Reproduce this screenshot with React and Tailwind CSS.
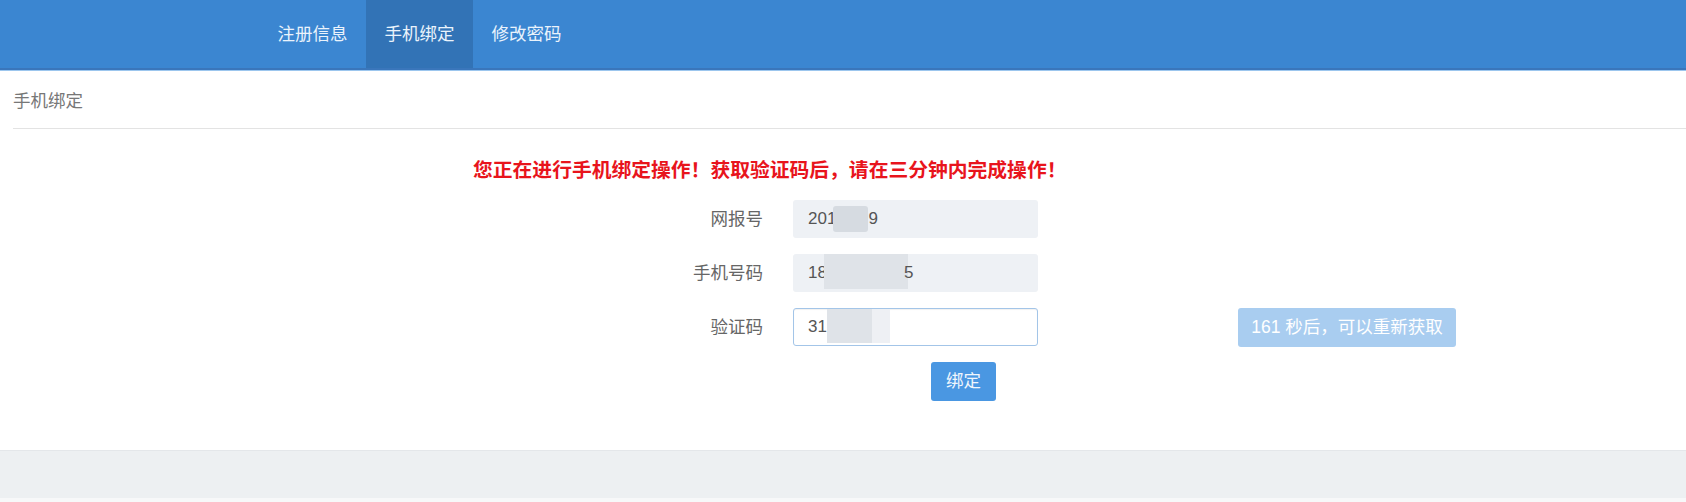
import React from "react";

const font = { fontFamily: '"Liberation Sans","Noto Sans CJK SC",sans-serif' };

function Label({ children }) {
  return (
    <div className="w-[100px] ml-[663px] mr-[30px] text-right text-[17.5px] text-[#666]">{children}</div>
  );
}

export default function App() {
  return (
    <div className="w-[1686px] h-[502px] bg-white flex flex-col" style={font}>
      {/* Header */}
      <div className="h-[70px] bg-[#3b86d1] flex pl-[259px] shadow-[0_1px_0_#9cc6ee] border-b-[2px] border-[#3a76bb] box-border">
        <div className="h-full px-[18.5px] flex items-center text-[17.5px] text-[#eaf3fc]">注册信息</div>
        <div className="h-full px-[18.5px] flex items-center text-[17.5px] text-[#eaf3fc] bg-[#3273b6]">手机绑定</div>
        <div className="h-full px-[18.5px] flex items-center text-[17.5px] text-[#eaf3fc]">修改密码</div>
      </div>

      {/* Breadcrumb */}
      <div className="ml-[13px] h-[59px] flex items-center text-[17.5px] text-[#777] border-b border-[#e3e3e3] pt-[5px]">
        手机绑定
      </div>

      {/* Warning */}
      <div className="mt-[28px] pl-[473px] h-[28px] flex items-center text-[19.8px] font-bold text-[#e8141c] whitespace-nowrap">
        您正在进行手机绑定操作！获取验证码后，请在三分钟内完成操作！
      </div>

      {/* Form */}
      <div className="mt-[15px] flex flex-col gap-[16px]">
        <div className="flex items-center h-[38px]">
          <Label>网报号</Label>
          <div className="w-[245px] h-[38px] bg-[#eef1f5] rounded-[3px] flex items-center pl-[15px] text-[17px] text-[#555]">
            <span>201</span>
            <span className="inline-block w-[35px] h-[26px] bg-[#d6dbe1] ml-[-3px] rounded-[3px]"></span>
            <span>9</span>
          </div>
        </div>
        <div className="flex items-center h-[38px]">
          <Label>手机号码</Label>
          <div className="w-[245px] h-[38px] bg-[#eef1f5] rounded-[3px] flex items-center pl-[15px] text-[17px] text-[#555]">
            <span>18</span>
            <span className="inline-block w-[84px] h-[35px] bg-[#dfe3e8] ml-[-3px] mt-[-3px]"></span>
            <span className="ml-[-4px]">5</span>
          </div>
        </div>
        <div className="flex items-center h-[38px]">
          <Label>验证码</Label>
          <div className="w-[245px] h-[38px] bg-white border border-[#a3c5e8] rounded-[3px] shadow-[inset_0_1px_1px_rgba(0,0,0,0.06)] flex items-center pl-[14px] text-[17px] text-[#555]">
            <span>31</span>
            <span className="inline-block w-[45px] h-[34px] bg-[#dfe3e8] mt-[-2px]"></span>
            <span className="inline-block w-[18px] h-[34px] bg-[#eef0f4] mt-[-2px]"></span>
          </div>
          <div className="ml-[200px] w-[218px] h-[39px] bg-[#a9cdf0] rounded-[3px] flex items-center justify-center text-[17.5px] text-white whitespace-nowrap">
            161 秒后，可以重新获取
          </div>
        </div>
      </div>

      <div className="mt-[16px] ml-[931px] w-[65px] h-[39px] bg-[#4a97e2] rounded-[3px] flex items-center justify-center text-[17.5px] text-[#f0f6fd]">
        绑定
      </div>

      {/* Footer */}
      <div className="mt-[49px] h-[48px] bg-[#edf0f2] border-t border-[#e4e7ea]"></div>
      <div className="flex-1 bg-[#f7f8f9]"></div>
    </div>
  );
}
